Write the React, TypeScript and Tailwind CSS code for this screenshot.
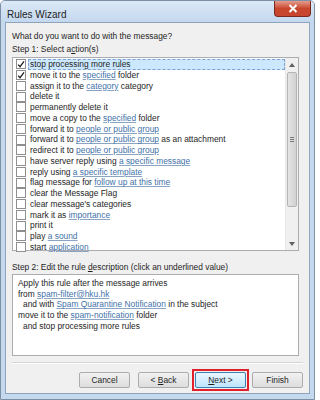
import React from 'react';

type Part = { t: string; link?: boolean };

const actions: { parts: Part[]; checked?: boolean; selected?: boolean }[] = [
  { parts: [{ t: 'stop processing more rules' }], checked: true, selected: true },
  { parts: [{ t: 'move it to the ' }, { t: 'specified', link: true }, { t: ' folder' }], checked: true },
  { parts: [{ t: 'assign it to the ' }, { t: 'category', link: true }, { t: ' category' }] },
  { parts: [{ t: 'delete it' }] },
  { parts: [{ t: 'permanently delete it' }] },
  { parts: [{ t: 'move a copy to the ' }, { t: 'specified', link: true }, { t: ' folder' }] },
  { parts: [{ t: 'forward it to ' }, { t: 'people or public group', link: true }] },
  { parts: [{ t: 'forward it to ' }, { t: 'people or public group', link: true }, { t: ' as an attachment' }] },
  { parts: [{ t: 'redirect it to ' }, { t: 'people or public group', link: true }] },
  { parts: [{ t: 'have server reply using ' }, { t: 'a specific message', link: true }] },
  { parts: [{ t: 'reply using ' }, { t: 'a specific template', link: true }] },
  { parts: [{ t: 'flag message for ' }, { t: 'follow up at this time', link: true }] },
  { parts: [{ t: 'clear the Message Flag' }] },
  { parts: [{ t: "clear message's categories" }] },
  { parts: [{ t: 'mark it as ' }, { t: 'importance', link: true }] },
  { parts: [{ t: 'print it' }] },
  { parts: [{ t: 'play ' }, { t: 'a sound', link: true }] },
  { parts: [{ t: 'start ' }, { t: 'application', link: true }] },
];

const Link = ({ children }: { children: React.ReactNode }) => (
  <span className="text-[#4272a8] underline decoration-[#8aa4c4]">{children}</span>
);

const Check = ({ on }: { on?: boolean }) => (
  <div className="w-[10px] h-[10px] border border-[#8f8f8f] bg-white flex items-center justify-center shrink-0">
    {on && (
      <svg width="9" height="9" viewBox="0 0 9 9">
        <path d="M1.3 4.6 L3.4 7 L7.9 1" stroke="#1a1a1a" strokeWidth="1.4" fill="none" />
      </svg>
    )}
  </div>
);

const Button = ({ label, focus }: { label: React.ReactNode; focus?: boolean }) => (
  <div
    className={`w-[51px] h-[16px] flex items-center justify-center rounded-[2px] border ${
      focus
        ? 'border-[#3c7fb1] bg-gradient-to-b from-[#eaf6fd] to-[#bee6fd]'
        : 'border-[#acacac] bg-gradient-to-b from-[#f2f2f2] to-[#dddddd]'
    }`}
  >
    {label}
  </div>
);

export default function App() {
  return (
    <div
      className="w-[315px] h-[400px] bg-[#c4d8ee] border border-[#7d8fa5] rounded-t-[5px] flex flex-col text-[8.4px] text-[#1e1e1e] overflow-hidden"
      style={{ fontFamily: '"Liberation Sans", Arial, sans-serif' }}
    >
      {/* title bar */}
      <div className="h-[21px] shrink-0 flex items-start justify-between bg-gradient-to-b from-[#dce9f7] to-[#c4d8ee]">
        <div className="pl-[6px] pt-[6px] text-[10px] text-[#1e1e1e]">Rules Wizard</div>
        <div className="mr-[3px] w-[37px] h-[16px] rounded-b-[4px] bg-gradient-to-b from-[#e49b8e] via-[#c9462c] to-[#c84630] border border-[#7a2a1e] border-t-0 flex items-center justify-center">
          <svg width="10" height="9" viewBox="0 0 10 9">
            <path d="M1.5 1 L8.5 8 M8.5 1 L1.5 8" stroke="white" strokeWidth="2" />
          </svg>
        </div>
      </div>

      {/* client */}
      <div className="flex-1 mx-[4px] mb-[5px] bg-[#f0f0f0] border border-[#8ea3bd] flex flex-col pl-[6px] pr-[10px]">
        <div className="mt-[7px] leading-[13px]">What do you want to do with the message?</div>
        <div className="leading-[13px]">
          Step 1: Select a<span className="underline">c</span>tion(s)
        </div>

        <div className="mt-[1px] h-[194px] border border-[#abadb3] bg-white flex">
          <div className="flex-1 pt-[1px] pl-[1px]">
            {actions.map((a, i) => (
              <div key={i} className="h-[10.75px] flex items-center">
                <div className="pl-[2px] pr-[2px]">
                  <Check on={a.checked} />
                </div>
                <div
                  className={`h-full flex items-center pl-[1px] whitespace-pre ${
                    a.selected ? 'flex-1 bg-[#cce8ff] border border-dashed border-[#7da2ce]' : 'border border-transparent'
                  }`}
                >
                  <span>
                    {a.parts.map((p, j) => (p.link ? <Link key={j}>{p.t}</Link> : <span key={j}>{p.t}</span>))}
                  </span>
                </div>
              </div>
            ))}
          </div>
          {/* scrollbar */}
          <div className="w-[13px] bg-[#f0f0f0] flex flex-col items-center border-l border-[#e8e8e8]">
            <div className="h-[13px] flex items-center justify-center">
              <svg width="6" height="4" viewBox="0 0 6 4">
                <path d="M0 4 L3 0 L6 4 Z" fill="#606060" />
              </svg>
            </div>
            <div className="mt-[1px] h-[135px] w-[10px] rounded-[2px] border border-[#b4b4b4] bg-gradient-to-r from-[#e4e4e4] to-[#d2d2d2] flex flex-col items-center justify-center gap-[1px]">
              <div className="w-[4px] h-px bg-[#7a7a7a]" />
              <div className="w-[4px] h-px bg-[#7a7a7a]" />
              <div className="w-[4px] h-px bg-[#7a7a7a]" />
            </div>
            <div className="flex-1" />
            <div className="h-[13px] flex items-center justify-center">
              <svg width="6" height="4" viewBox="0 0 6 4">
                <path d="M0 0 L3 4 L6 0 Z" fill="#606060" />
              </svg>
            </div>
          </div>
        </div>

        <div className="mt-[10px] leading-[12px]">
          Step 2: Edit the rule <span className="underline">d</span>escription (click an underlined value)
        </div>
        <div className="mt-[1px] h-[82px] border border-[#abadb3] bg-white px-[5px] pt-[3px] leading-[10.7px] whitespace-nowrap">
          <div>Apply this rule after the message arrives</div>
          <div>
            from <Link>spam-filter@hku.hk</Link>
          </div>
          <div className="pl-[5px]">
            and with <Link>Spam Quarantine Notification</Link> in the subject
          </div>
          <div>
            move it to the <Link>spam-notification</Link> folder
          </div>
          <div className="pl-[5px]">and stop processing more rules</div>
        </div>

        <div className="mt-[6px] -mr-[4px] h-[2px] bg-[#d5d5d5] border-b border-white" />

        <div className="mt-[5px] -mr-[4px] flex justify-end items-center gap-[8px]">
          <Button label="Cancel" />
          <Button
            label={
              <span>
                &lt; <span className="underline">B</span>ack
              </span>
            }
          />
          <div className="border-[2px] border-[#e0202a] p-[1px] -mx-[5px]">
            <Button
              focus
              label={
                <span>
                  <span className="underline">N</span>ext &gt;
                </span>
              }
            />
          </div>
          <Button label="Finish" />
        </div>
      </div>
    </div>
  );
}
